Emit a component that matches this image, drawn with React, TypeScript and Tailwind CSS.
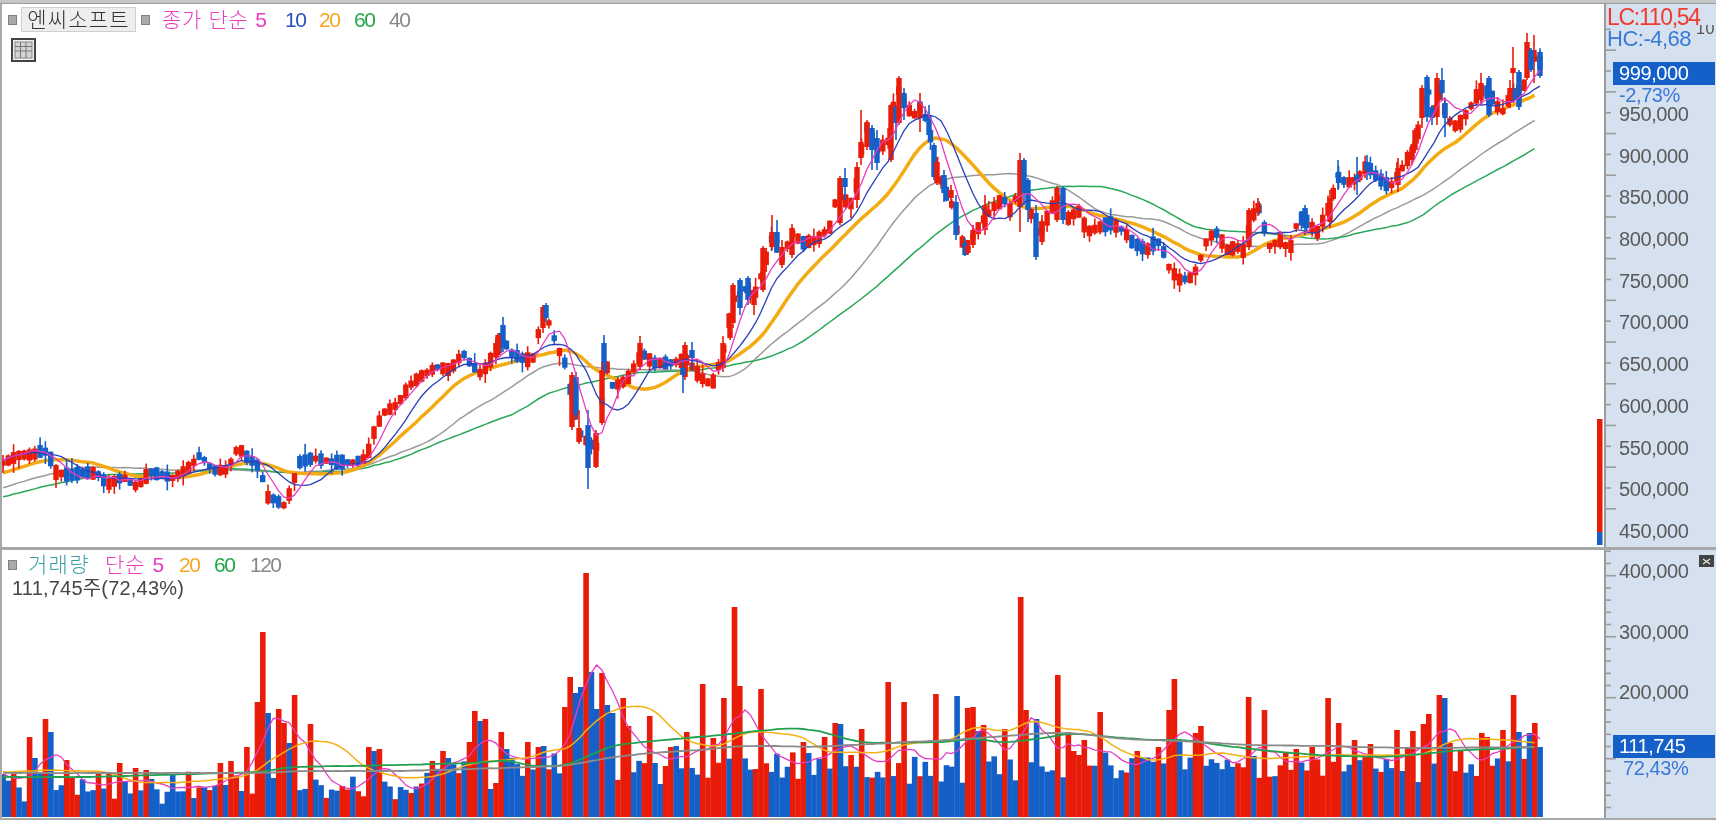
import * as React from 'react'

type P = [number, number]

const pricePath: P[] = [[3,463],[20,455],[33,455],[43,450],[50,455],[53,472],[70,475],[87,472],[100,475],[107,485],[123,477],[137,487],[150,472],[173,478],[190,467],[200,455],[213,470],[227,470],[238,447],[247,457],[260,467],[267,497],[277,500],[283,507],[293,487],[297,463],[313,458],[333,462],[353,462],[367,458],[372,437],[383,413],[397,405],[410,385],[420,377],[437,367],[450,370],[463,353],[470,363],[480,373],[487,367],[503,337],[510,353],[527,360],[533,358],[543,312],[550,325],[557,347],[567,367],[572,403],[580,433],[588,443],[597,447],[602,400],[605,360],[613,387],[627,380],[642,353],[653,363],[670,363],[687,360],[700,377],[712,385],[723,353],[733,300],[747,287],[753,300],[763,270],[772,237],[782,257],[793,233],[802,243],[817,240],[830,227],[838,190],[850,207],[857,183],[862,147],[867,127],[877,150],[890,140],[893,110],[899,90],[905,103],[913,117],[920,107],[928,123],[935,160],[943,187],[953,207],[957,230],[965,248],[973,237],[983,220],[997,203],[1007,200],[1012,217],[1020,173],[1025,183],[1035,233],[1043,227],[1057,197],[1063,207],[1070,222],[1077,207],[1087,232],[1100,227],[1110,223],[1123,230],[1133,243],[1147,250],[1157,240],[1163,250],[1170,270],[1180,280],[1193,277],[1200,260],[1208,237],[1217,233],[1227,250],[1237,247],[1247,253],[1249,225],[1258,205],[1270,247],[1280,240],[1290,250],[1297,223],[1303,217],[1317,233],[1330,205],[1338,177],[1347,183],[1357,180],[1367,165],[1377,177],[1390,187],[1398,175],[1407,160],[1417,140],[1422,103],[1430,90],[1433,113],[1442,87],[1445,113],[1453,127],[1460,123],[1467,113],[1480,90],[1490,93],[1495,103],[1502,113],[1510,97],[1518,90],[1522,100],[1528,58],[1533,57],[1540,63]]

const ma20: P[] = [[3,473],[43,460],[60,459],[97,463],[113,470],[140,478],[157,475],[187,478],[207,472],[247,462],[267,463],[287,473],[333,474],[353,471],[370,463],[400,437],[427,412],[463,377],[500,365],[553,352],[573,348],[597,373],[617,378],[633,390],[660,388],[677,373],[700,365],[723,365],[760,340],[800,280],[840,240],[867,213],[887,197],[913,157],[923,140],[940,136],[953,143],[980,173],[1000,195],[1027,210],[1070,205],[1097,215],[1133,223],[1157,233],[1197,255],[1243,258],[1267,242],[1310,233],[1347,222],[1380,198],[1407,187],[1437,153],[1463,138],[1483,117],[1513,105],[1538,94]]
const ma40: P[] = [[3,488],[37,477],[53,474],[77,467],[140,468],[167,470],[243,470],[290,473],[360,468],[400,453],[433,440],[467,413],[500,395],[540,367],[560,362],[587,367],[633,370],[693,370],[720,378],[740,375],[767,347],[800,322],[840,290],[867,260],[897,217],[927,185],[953,177],[1017,173],[1037,178],[1067,188],[1100,213],[1130,217],[1163,220],[1197,238],[1240,247],[1330,243],[1373,219],[1430,192],[1483,153],[1538,118]]
const ma60: P[] = [[3,497],[50,485],[100,475],[183,473],[233,468],[290,473],[353,471],[400,459],[433,445],[483,425],[517,413],[547,393],[577,385],[633,373],[700,370],[733,365],[767,358],[800,344],[873,290],[917,250],[950,223],[983,205],[1030,190],[1067,186],[1110,187],[1150,202],[1197,229],[1263,233],[1330,240],[1363,232],[1413,222],[1447,197],[1497,170],[1538,147]]

const vol20: P[] = [[3,772],[50,770],[110,772],[133,782],[170,783],[213,780],[253,775],[267,762],[300,743],[320,740],[342,745],[362,767],[400,778],[436,777],[471,763],[536,757],[550,748],[568,752],[579,738],[593,723],[607,712],[629,706],[650,706],[668,723],[679,737],[696,744],[721,748],[743,732],[771,732],[807,737],[821,752],[882,753],[907,743],[950,742],[973,725],[1000,732],[1015,730],[1034,717],[1050,727],[1092,731],[1122,752],[1157,762],[1180,753],[1195,757],[1218,752],[1260,759],[1333,755],[1425,755],[1447,742],[1467,738],[1505,740],[1539,743]]
const vol60: P[] = [[3,777],[90,777],[260,772],[290,767],[400,765],[471,763],[514,760],[525,766],[564,766],[579,760],[614,745],[643,742],[686,738],[721,735],[757,731],[793,728],[821,731],[839,737],[864,743],[950,742],[973,738],[1004,743],[1050,737],[1072,733],[1111,737],[1153,740],[1187,740],[1218,745],[1279,752],[1333,756],[1390,757],[1432,753],[1447,751],[1539,747]]
const vol120: P[] = [[3,773],[260,773],[300,771],[400,771],[471,769],[564,766],[614,757],[650,753],[700,750],[739,746],[779,746],[811,747],[950,740],[1046,733],[1076,733],[1122,739],[1203,742],[1245,745],[1333,746],[1356,747],[1409,748],[1539,747]]

// x, body top, body bottom, wick top, wick bottom, r/b
const bigCandles: [number, number, number, number, number, string][] = [
  [604,343,373,335,376,'b'],[572,375,427,372,430,'r'],[576,377,415,372,420,'b'],[579,428,442,410,444,'r'],[588,425,468,410,489,'b'],[596,433,467,430,468,'r'],[602,370,423,362,425,'r'],
  [503,325,347,317,352,'b'],[498,335,355,333,357,'r'],[543,307,328,305,333,'r'],[546,305,318,303,322,'b'],[640,343,367,336,370,'r'],[685,345,377,342,380,'r'],[692,350,358,342,370,'b'],[683,368,375,360,393,'b'],
  [723,343,368,336,372,'r'],[733,285,323,283,328,'r'],[730,325,338,320,340,'r'],[740,280,308,278,315,'b'],[748,278,300,276,305,'b'],[754,298,305,295,315,'r'],
  [763,248,290,246,292,'r'],[772,232,247,215,250,'r'],[777,232,243,220,250,'b'],[782,247,265,240,268,'r'],[792,228,255,224,258,'r'],[840,178,223,176,225,'r'],[845,178,187,168,200,'b'],[857,167,200,162,208,'r'],[861,142,158,110,165,'r'],[867,122,147,120,150,'r'],[872,128,150,125,170,'b'],[877,138,163,130,170,'b'],
  [891,105,160,104,162,'r'],[896,107,123,105,140,'b'],[899,78,123,76,125,'r'],[904,93,108,88,120,'b'],[920,103,118,93,132,'r'],[929,115,135,105,138,'b'],[934,145,177,143,180,'b'],[937,162,183,160,185,'r'],[944,175,193,170,202,'b'],[951,190,198,185,205,'r'],[956,202,235,195,240,'b'],[965,243,255,238,256,'b'],[968,246,253,240,255,'r'],[973,230,245,225,248,'r'],[985,205,230,195,235,'r'],
  [1020,160,207,153,232,'r'],[1024,160,193,158,205,'b'],[1028,180,210,178,222,'b'],[1036,213,257,205,260,'b'],[1042,222,242,215,245,'r'],[1057,188,220,186,222,'r'],[1063,188,220,186,224,'b'],
  [1249,210,247,208,250,'r'],[1258,203,212,198,216,'r'],[1305,208,228,205,235,'b'],[1330,198,222,190,228,'r'],[1338,173,178,160,190,'b'],[1357,175,182,157,195,'b'],[1367,162,170,155,180,'b'],[1398,168,185,158,192,'r'],[1415,130,150,128,153,'r'],[1412,147,160,146,165,'r'],[1422,88,118,85,128,'r'],[1427,77,117,75,122,'b'],[1432,107,118,105,125,'b'],[1437,78,117,73,125,'r'],[1442,80,93,68,100,'b'],[1445,103,118,100,137,'b'],[1481,83,100,73,105,'r'],[1489,78,115,76,117,'b'],[1510,88,103,80,108,'r'],[1519,72,107,70,110,'b'],[1513,68,73,47,90,'r'],[1527,42,78,33,80,'r'],[1534,50,60,35,83,'r'],[1531,50,70,48,72,'b'],[1540,52,76,51,78,'b'],
]

// x, top of bar, r/b
const bigBars: [number, number, string][] = [
  [29,737,'r'],[47,719,'r'],[51,732,'b'],[35,758,'b'],[68,760,'r'],[119,763,'r'],[137,768,'r'],[148,770,'r'],[222,763,'r'],[231,761,'r'],[247,747,'r'],[258,702,'r'],[264,632,'r'],[270,713,'b'],[277,709,'r'],[285,723,'r'],[290,743,'b'],[294,695,'r'],[312,724,'r'],[367,747,'r'],[372,751,'b'],[380,749,'r'],
  [430,761,'r'],[445,751,'r'],[448,758,'b'],[469,742,'r'],[473,743,'b'],[477,711,'r'],[481,721,'b'],[486,719,'r'],[490,789,'b'],[495,783,'r'],[499,732,'r'],[504,749,'b'],[529,742,'r'],[538,747,'r'],[543,721,'r'],[546,746,'b'],[567,707,'r'],[572,677,'r'],[575,693,'b'],[579,651,'r'],[583,687,'b'],[588,573,'r'],[593,672,'b'],[598,709,'b'],[602,673,'r'],[605,705,'b'],[613,713,'b'],[622,698,'r'],[627,740,'b'],[631,726,'r'],[652,716,'r'],[656,763,'b'],[660,784,'b'],[665,766,'r'],[670,747,'r'],[674,728,'r'],[678,746,'b'],[686,732,'r'],[700,684,'r'],[712,738,'r'],[724,698,'r'],[733,607,'r'],[738,711,'b'],[742,686,'r'],[763,689,'r'],[801,742,'r'],[806,753,'b'],[822,738,'r'],[827,737,'r'],[836,723,'r'],[840,724,'b'],[861,729,'r'],[890,682,'r'],[905,702,'r'],[935,694,'r'],
  [955,611,'r'],[959,696,'b'],[968,708,'r'],[973,707,'r'],[976,731,'b'],[984,725,'r'],[1003,729,'r'],[1020,597,'r'],[1028,710,'r'],[1036,651,'r'],[1039,719,'b'],[1056,675,'r'],[1066,732,'r'],[1074,751,'r'],[1083,740,'r'],[1100,712,'r'],[1139,751,'r'],[1160,747,'r'],[1168,710,'r'],[1172,679,'r'],[1178,740,'b'],[1193,733,'r'],[1203,726,'r'],[1249,697,'r'],[1267,710,'r'],[1285,752,'r'],[1296,749,'r'],[1314,747,'r'],[1330,698,'r'],[1339,723,'r'],[1356,740,'r'],[1368,744,'r'],[1398,730,'r'],[1407,747,'r'],[1412,731,'r'],[1421,724,'r'],[1428,714,'r'],[1437,695,'r'],[1442,682,'r'],[1446,698,'b'],[1449,743,'r'],[1459,750,'r'],[1480,733,'r'],[1489,737,'r'],[1501,730,'r'],[1513,695,'r'],[1519,732,'b'],[1527,670,'r'],[1530,733,'b'],[1535,723,'r'],[1540,747,'b'],
]

const RED = '#e81c08'
const BLUE = '#1460c8'
const STEP = 5.3
const COUNT = 291

function seeded(seed: number) {
  let s = seed
  return () => {
    s = (s * 16807) % 2147483647
    return s / 2147483647
  }
}

function lerp(path: P[], x: number) {
  if (x <= path[0][0]) return path[0][1]
  for (let i = 1; i < path.length; i++) {
    if (x <= path[i][0]) {
      const [x0, y0] = path[i - 1]
      const [x1, y1] = path[i]
      return y0 + ((y1 - y0) * (x - x0)) / (x1 - x0)
    }
  }
  return path[path.length - 1][1]
}

const pts = (path: number[][]) => path.map((p) => `${p[0].toFixed(1)},${p[1].toFixed(1)}`).join(' ')

function movingAvg(values: number[], n: number) {
  return values.map((_, i) => {
    const from = Math.max(0, i - n + 1)
    const part = values.slice(from, i + 1)
    return part.reduce((a, b) => a + b, 0) / part.length
  })
}

const xAt = (i: number) => 3 + i * STEP
const indexAt = (x: number) => Math.round((x - 3) / STEP)

// resample a key point line on the bar grid, round the corners, add a little wobble
function smooth(path: P[], seed: number, wobble = 0.6) {
  const rand = seeded(seed)
  const lastX = path[path.length - 1][0]
  const ys: number[] = []
  for (let i = 0; i < COUNT && xAt(i) <= lastX; i++) ys.push(lerp(path, xAt(i)))
  return ys.map((_, i) => {
    const w = Math.min(2, i, ys.length - 1 - i)
    const part = ys.slice(i - w, i + w + 1)
    const y = part.reduce((a, b) => a + b, 0) / part.length
    return [xAt(i), y + (rand() - 0.5) * wobble]
  })
}

function buildCandles() {
  const rand = seeded(4711)
  const out: { x: number; top: number; bot: number; wt: number; wb: number; color: string; close: number }[] = []
  for (let i = 0; i < COUNT; i++) {
    const x = xAt(i)
    const c = lerp(pricePath, x)
    const next = lerp(pricePath, x + STEP)
    const half = 2.5 + rand() * 5
    const up = next < c - 2 || rand() > 0.6
    const top = c - half
    const bot = c + half
    out.push({
      x,
      top,
      bot,
      wt: top - rand() * rand() * 12,
      wb: bot + rand() * rand() * 12,
      color: up ? RED : BLUE,
      close: up ? top : bot,
    })
  }
  return out
}

const candles = buildCandles()
const closes = candles.map((c) => c.close)
const ma5 = movingAvg(closes, 5).map((y, i) => [xAt(i), y])
const ma10 = movingAvg(closes, 10).map((y, i) => [xAt(i), y])

function buildBars() {
  const rand = seeded(2024)
  const out: { x: number; top: number; color: string }[] = []
  for (let i = 0; i < COUNT; i++) {
    const x = xAt(i)
    const base = x < 430 ? 770 : 750
    out.push({ x, top: base + ((rand() + rand()) / 2) * 34, color: rand() > 0.66 ? RED : BLUE })
  }
  bigBars.forEach(([x, top, c]) => {
    const b = out[indexAt(x)]
    if (b) {
      b.top = top
      b.color = c === 'r' ? RED : BLUE
    }
  })
  return out
}

const bars = buildBars()
const volMa5 = smooth(movingAvg(bars.map((b) => b.top), 5).map((y, i) => [xAt(i), y] as P), 7, 0.8)

const Bullet = () => <div className="w-[9px] h-[10px] bg-[#a9a9a9] border border-[#808080]" />

const PriceChart = () => (
  <svg viewBox="2 4 1602 543" className="w-full h-full block">
    <polyline points={pts(smooth(ma40, 11))} fill="none" stroke="#9a9a9a" strokeWidth={1.5} />
    <polyline points={pts(smooth(ma60, 12))} fill="none" stroke="#2aa85a" strokeWidth={1.5} />
    <polyline points={pts(smooth(ma20, 13))} fill="none" stroke="#f2ab12" strokeWidth={3.5} strokeLinejoin="round" />
    {candles.map((c, i) => (
      <g key={i}>
        <rect x={c.x - 0.8} y={c.wt} width={1.6} height={c.wb - c.wt} fill={c.color} />
        <rect x={c.x - 2.7} y={c.top} width={5.4} height={c.bot - c.top} fill={c.color} />
      </g>
    ))}
    {bigCandles.map(([x, t, b, wt, wb, col], i) => {
      const fill = col === 'r' ? RED : BLUE
      return (
        <g key={i}>
          <rect x={x - 0.8} y={wt} width={1.6} height={wb - wt} fill={fill} />
          <rect x={x - 2.7} y={t} width={5.4} height={b - t} fill={fill} />
        </g>
      )
    })}
    <polyline points={pts(ma10)} fill="none" stroke="#2a3fb8" strokeWidth={1.3} />
    <polyline points={pts(ma5)} fill="none" stroke="#e83cc0" strokeWidth={1.3} />
    <rect x={1597} y={419} width={5.5} height={113} fill={RED} />
    <rect x={1597} y={532} width={5.5} height={13} fill={BLUE} />
  </svg>
)

const VolumeChart = () => (
  <svg viewBox="2 550 1602 268" className="w-full h-full block">
    {bars.map((b, i) => (
      <rect key={i} x={b.x - 2.7} y={b.top} width={5.6} height={817 - b.top} fill={b.color} />
    ))}
    <polyline points={pts(volMa5)} fill="none" stroke="#e83cc0" strokeWidth={1.3} />
    <polyline points={pts(smooth(vol20, 21))} fill="none" stroke="#f5b014" strokeWidth={1.5} />
    <polyline points={pts(smooth(vol60, 22, 0.3))} fill="none" stroke="#22a050" strokeWidth={1.8} />
    <polyline points={pts(smooth(vol120, 23, 0.3))} fill="none" stroke="#8a8a8a" strokeWidth={1.8} />
  </svg>
)

const priceLabels = ['950,000', '900,000', '850,000', '800,000', '750,000', '700,000', '650,000', '600,000', '550,000', '500,000', '450,000']
const volumeLabels = ['400,000', '300,000', '200,000']

const PriceAxis = () => (
  <div className="relative w-[112px] h-full bg-[#d6e1f0] border-l-2 border-[#9c9c9c] overflow-hidden">
    <svg className="absolute left-0 top-0" width={20} height={543}>
      {Array.from({ length: 24 }, (_, i) => {
        const y = 28.5 + i * 20.85 - 4
        return <rect key={i} x={0} y={y} width={i % 2 === 1 ? 10 : 5} height={1.6} fill="#9c9c9c" />
      })}
    </svg>
    <div className="flex flex-col pl-[13px] pt-[90px] text-[20px] tracking-[-0.4px] text-[#5a5a5a] leading-[41.7px]">
      {priceLabels.map((l) => (
        <div key={l} className="h-[41.7px]">{l}</div>
      ))}
    </div>
    <div className="absolute left-[90px] top-[21px] h-[14px] overflow-hidden text-[#555] text-[16px] leading-[10px] tracking-[0.5px]">
      <div className="mt-[-1px]">10</div>
    </div>
    <div className="absolute left-[1px] top-[2px] text-[23px] leading-[22px] tracking-[-1.3px] text-[#ef3b2d] whitespace-nowrap">LC:110,54</div>
    <div className="absolute left-[1px] top-[24px] text-[22px] leading-[21px] tracking-[-0.5px] text-[#3a78d8] whitespace-nowrap">HC:-4,68</div>
    <div className="absolute left-[7px] top-[58px] w-[102px] h-[23px] bg-[#1460c8] text-white text-[20px] leading-[23px] tracking-[-0.4px] pl-[6px]">999,000</div>
    <div className="absolute left-[13px] top-[81px] text-[#3a78d8] text-[20px] leading-[21px] tracking-[-0.4px]">-2,73%</div>
  </div>
)

const VolumeAxis = () => (
  <div className="relative w-[112px] h-full bg-[#d6e1f0] border-l-2 border-[#9c9c9c] overflow-hidden">
    <svg className="absolute left-0 top-0" width={20} height={268}>
      {Array.from({ length: 22 }, (_, i) => {
        const y = 0.5 + i * 12.2
        return <rect key={i} x={0} y={y} width={(i + 3) % 5 === 0 ? 10 : 5} height={1.6} fill="#9c9c9c" />
      })}
    </svg>
    <div className="flex flex-col pl-[13px] pt-[8px] text-[20px] tracking-[-0.4px] text-[#5a5a5a]">
      {volumeLabels.map((l) => (
        <div key={l} className="h-[60.5px] leading-[26px]">{l}</div>
      ))}
    </div>
    <div className="absolute left-[93px] top-[5px] w-[15px] h-[12px] bg-[#444] flex items-center justify-center">
      <svg width={9} height={7} viewBox="0 0 9 7">
        <path d="M1 1l7 5M8 1L1 6" stroke="#e8e8e8" strokeWidth={1.2} />
      </svg>
    </div>
    <div className="absolute left-[7px] top-[185px] w-[102px] h-[23px] bg-[#1460c8] text-white text-[20px] leading-[23px] tracking-[-0.4px] pl-[6px]">111,745</div>
    <div className="absolute left-[17px] top-[208px] text-[#3a78d8] text-[20px] leading-[21px] tracking-[-0.4px]">72,43%</div>
  </div>
)

const PriceLegend = () => (
  <div className="absolute left-[6px] top-[3px]">
    <div className="flex items-center h-[25px] text-[21px] font-light">
      <Bullet />
      <div className="ml-[4px] w-[115px] h-[25px] bg-[#eeeeee] border border-[#cfcfcf] text-[#333] leading-[23px] text-center tracking-[1.2px]">엔씨소프트</div>
      <div className="ml-[5px]"><Bullet /></div>
      <span className="ml-[12px] w-[107px] text-[#e83cc0] tracking-[0.7px] whitespace-nowrap">종가 단순 5</span>
      <span className="ml-[16px] w-[19px] text-[#2a4fc0] tracking-[-1.5px]">10</span>
      <span className="ml-[15px] w-[20px] text-[#f5a623] tracking-[-1.5px]">20</span>
      <span className="ml-[15px] w-[20px] text-[#22a84a] tracking-[-1.5px]">60</span>
      <span className="ml-[15px] w-[20px] text-[#888] tracking-[-1.5px]">40</span>
    </div>
    <svg className="mt-[6px] ml-[3px]" width={26} height={25} viewBox="0 0 26 25">
      <rect x={1} y={1} width={23} height={22} fill="#eee" stroke="#444" strokeWidth={2} />
      <rect x={4} y={4} width={17} height={16} fill="#d4d4d4" stroke="#888" />
      <path d="M4 8.5h17M4 13h17M9.5 4v16M15 4v16" stroke="#777" fill="none" />
    </svg>
  </div>
)

const VolumeLegend = () => (
  <div className="absolute left-[6px] top-[2px]">
    <div className="flex items-center h-[25px] text-[21px] font-light">
      <Bullet />
      <span className="ml-[11px] w-[66px] text-[#3a9ea8] tracking-[1.3px] whitespace-nowrap">거래량</span>
      <span className="ml-[11px] w-[60px] text-[#e83cc0] tracking-[1px] whitespace-nowrap">단순 5</span>
      <span className="ml-[14px] w-[20px] text-[#f5a623] tracking-[-1.5px]">20</span>
      <span className="ml-[15px] w-[20px] text-[#22a84a] tracking-[-1.5px]">60</span>
      <span className="ml-[16px] w-[30px] text-[#888] tracking-[-1.5px]">120</span>
    </div>
    <div className="ml-[4px] text-[20px] leading-[22px] text-[#444] tracking-[0.2px] whitespace-nowrap">111,745주(72,43%)</div>
  </div>
)

export default function App() {
  return (
    <div
      className="w-[1716px] h-[820px] flex flex-col bg-white overflow-hidden blur-[0.35px]"
      style={{ fontFamily: '"Liberation Sans", "Noto Sans CJK KR", sans-serif' }}
    >
      <div className="h-[4px] bg-[#c6c6c6] border-b border-[#9c9c9c]" />
      <div className="flex h-[543px] border-l-2 border-[#a8a8a8]">
        <div className="relative flex-1 min-w-0">
          <PriceChart />
          <PriceLegend />
        </div>
        <PriceAxis />
      </div>
      <div className="h-[3px] bg-[#a8a8a8]" />
      <div className="flex h-[268px] border-l-2 border-[#a8a8a8]">
        <div className="relative flex-1 min-w-0">
          <VolumeChart />
          <VolumeLegend />
        </div>
        <VolumeAxis />
      </div>
      <div className="h-[2px] bg-[#a8a8a8]" />
    </div>
  )
}
